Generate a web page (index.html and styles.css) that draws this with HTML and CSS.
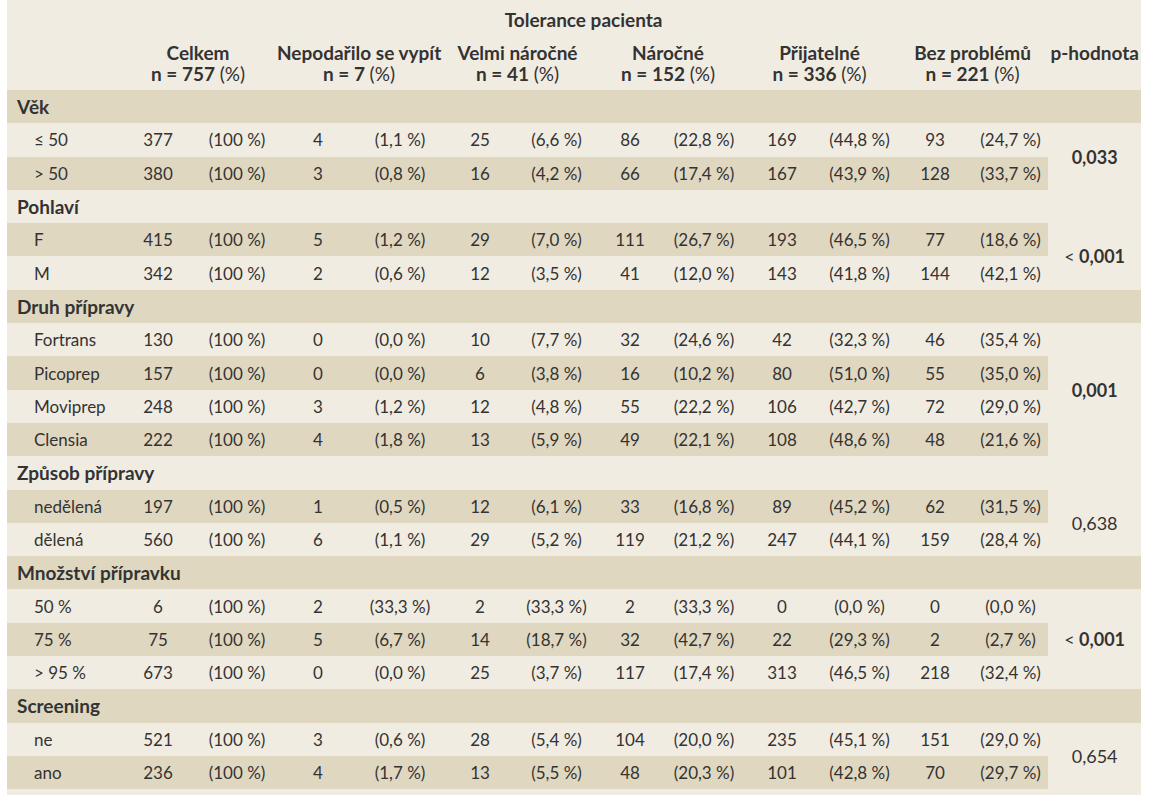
FILE: index.html
```html
<!DOCTYPE html>
<html lang="cs">
<head>
<meta charset="utf-8">
<title>Tolerance pacienta</title>
<link rel="stylesheet" href="styles.css">
</head>
<body>
<div class="wrap">
<table class="tbl">
<colgroup>
<col class="c-label">
<col class="c-n1"><col class="c-p1">
<col class="c-n2"><col class="c-p2">
<col class="c-n3"><col class="c-p3">
<col class="c-n4"><col class="c-p4">
<col class="c-n5"><col class="c-p5">
<col class="c-n6"><col class="c-p6">
<col class="c-pv">
</colgroup>
<thead>
<tr class="h1">
<th></th>
<th colspan="12">Tolerance pacienta</th>
<th></th>
</tr>
<tr class="h2">
<th></th>
<th colspan="2">Celkem<br>n = 757 <span class="reg">(%)</span></th>
<th colspan="2">Nepodařilo se vypít<br>n = 7 <span class="reg">(%)</span></th>
<th colspan="2">Velmi náročné<br>n = 41 <span class="reg">(%)</span></th>
<th colspan="2">Náročné<br>n = 152 <span class="reg">(%)</span></th>
<th colspan="2">Přijatelné<br>n = 336 <span class="reg">(%)</span></th>
<th colspan="2">Bez problémů<br>n = 221 <span class="reg">(%)</span></th>
<th class="pv-h">p-hodnota</th>
</tr>
</thead>
<tbody>
<tr class="d cat"><td colspan="14">Věk</td></tr>
<tr><td class="sub">≤ 50</td><td>377</td><td>(100 %)</td><td>4</td><td>(1,1 %)</td><td>25</td><td>(6,6 %)</td><td>86</td><td>(22,8 %)</td><td>169</td><td>(44,8 %)</td><td>93</td><td>(24,7 %)</td><td class="pv b" rowspan="2">0,033</td></tr>
<tr class="d"><td class="sub">&gt; 50</td><td>380</td><td>(100 %)</td><td>3</td><td>(0,8 %)</td><td>16</td><td>(4,2 %)</td><td>66</td><td>(17,4 %)</td><td>167</td><td>(43,9 %)</td><td>128</td><td>(33,7 %)</td></tr>

<tr class="cat"><td colspan="14">Pohlaví</td></tr>
<tr class="d"><td class="sub">F</td><td>415</td><td>(100 %)</td><td>5</td><td>(1,2 %)</td><td>29</td><td>(7,0 %)</td><td>111</td><td>(26,7 %)</td><td>193</td><td>(46,5 %)</td><td>77</td><td>(18,6 %)</td><td class="pv b" rowspan="2"><span class="lt">&lt;</span> 0,001</td></tr>
<tr><td class="sub">M</td><td>342</td><td>(100 %)</td><td>2</td><td>(0,6 %)</td><td>12</td><td>(3,5 %)</td><td>41</td><td>(12,0 %)</td><td>143</td><td>(41,8 %)</td><td>144</td><td>(42,1 %)</td></tr>

<tr class="d cat"><td colspan="14">Druh přípravy</td></tr>
<tr><td class="sub">Fortrans</td><td>130</td><td>(100 %)</td><td>0</td><td>(0,0 %)</td><td>10</td><td>(7,7 %)</td><td>32</td><td>(24,6 %)</td><td>42</td><td>(32,3 %)</td><td>46</td><td>(35,4 %)</td><td class="pv b" rowspan="4">0,001</td></tr>
<tr class="d"><td class="sub">Picoprep</td><td>157</td><td>(100 %)</td><td>0</td><td>(0,0 %)</td><td>6</td><td>(3,8 %)</td><td>16</td><td>(10,2 %)</td><td>80</td><td>(51,0 %)</td><td>55</td><td>(35,0 %)</td></tr>
<tr><td class="sub">Moviprep</td><td>248</td><td>(100 %)</td><td>3</td><td>(1,2 %)</td><td>12</td><td>(4,8 %)</td><td>55</td><td>(22,2 %)</td><td>106</td><td>(42,7 %)</td><td>72</td><td>(29,0 %)</td></tr>
<tr class="d"><td class="sub">Clensia</td><td>222</td><td>(100 %)</td><td>4</td><td>(1,8 %)</td><td>13</td><td>(5,9 %)</td><td>49</td><td>(22,1 %)</td><td>108</td><td>(48,6 %)</td><td>48</td><td>(21,6 %)</td></tr>

<tr class="cat"><td colspan="14">Způsob přípravy</td></tr>
<tr class="d"><td class="sub">nedělená</td><td>197</td><td>(100 %)</td><td>1</td><td>(0,5 %)</td><td>12</td><td>(6,1 %)</td><td>33</td><td>(16,8 %)</td><td>89</td><td>(45,2 %)</td><td>62</td><td>(31,5 %)</td><td class="pv" rowspan="2">0,638</td></tr>
<tr><td class="sub">dělená</td><td>560</td><td>(100 %)</td><td>6</td><td>(1,1 %)</td><td>29</td><td>(5,2 %)</td><td>119</td><td>(21,2 %)</td><td>247</td><td>(44,1 %)</td><td>159</td><td>(28,4 %)</td></tr>

<tr class="d cat"><td colspan="14">Množství přípravku</td></tr>
<tr><td class="sub">50 %</td><td>6</td><td>(100 %)</td><td>2</td><td>(33,3 %)</td><td>2</td><td>(33,3 %)</td><td>2</td><td>(33,3 %)</td><td>0</td><td>(0,0 %)</td><td>0</td><td>(0,0 %)</td><td class="pv b" rowspan="3"><span class="lt">&lt;</span> 0,001</td></tr>
<tr class="d"><td class="sub">75 %</td><td>75</td><td>(100 %)</td><td>5</td><td>(6,7 %)</td><td>14</td><td>(18,7 %)</td><td>32</td><td>(42,7 %)</td><td>22</td><td>(29,3 %)</td><td>2</td><td>(2,7 %)</td></tr>
<tr><td class="sub">&gt; 95 %</td><td>673</td><td>(100 %)</td><td>0</td><td>(0,0 %)</td><td>25</td><td>(3,7 %)</td><td>117</td><td>(17,4 %)</td><td>313</td><td>(46,5 %)</td><td>218</td><td>(32,4 %)</td></tr>

<tr class="d cat"><td colspan="14">Screening</td></tr>
<tr><td class="sub">ne</td><td>521</td><td>(100 %)</td><td>3</td><td>(0,6 %)</td><td>28</td><td>(5,4 %)</td><td>104</td><td>(20,0 %)</td><td>235</td><td>(45,1 %)</td><td>151</td><td>(29,0 %)</td><td class="pv" rowspan="2">0,654</td></tr>
<tr class="d"><td class="sub">ano</td><td>236</td><td>(100 %)</td><td>4</td><td>(1,7 %)</td><td>13</td><td>(5,5 %)</td><td>48</td><td>(20,3 %)</td><td>101</td><td>(42,8 %)</td><td>70</td><td>(29,7 %)</td></tr>
</tbody>
</table>
</div>
</body>
</html>
```

FILE: styles.css
```css
html, body {
  margin: 0;
  padding: 0;
  background: #ffffff;
}

.wrap {
  margin-left: 7px;
  width: 1134px;
  background: #f1ece2;
  padding-bottom: 6px;
}

.tbl {
  width: 1134px;
  table-layout: fixed;
  border-collapse: collapse;
  border-spacing: 0;
  font-family: Lato, "Open Sans", sans-serif;
  font-size: 17px;
  color: #333333;
}

.c-label { width: 112px; }
.c-n1 { width: 78px; }
.c-p1 { width: 80px; }
.c-n2 { width: 82px; }
.c-p2 { width: 82px; }
.c-n3 { width: 78px; }
.c-p3 { width: 75px; }
.c-n4 { width: 72px; }
.c-p4 { width: 76px; }
.c-n5 { width: 80px; }
.c-p5 { width: 75px; }
.c-n6 { width: 76px; }
.c-p6 { width: 75px; }
.c-pv { width: 93px; }

th {
  font-weight: 700;
  font-size: 19px;
  padding: 0;
  text-align: center;
  white-space: nowrap;
}

.h1 th {
  height: 38px;
  vertical-align: middle;
}

.h2 th {
  height: 52px;
  line-height: 21px;
  vertical-align: top;
  padding-top: 4px;
  box-sizing: border-box;
}

.reg {
  font-weight: 400;
}

td {
  padding: 0;
  height: 33.3px;
  text-align: center;
  vertical-align: middle;
  white-space: nowrap;
}

tr.d td {
  background: #e0d7c0;
}

td.pv {
  background: #f1ece2 !important;
  font-size: 18px;
}

td.b {
  font-weight: 700;
}

.lt {
  font-weight: 400;
}

.cat td {
  font-weight: 700;
  font-size: 19px;
  text-align: left;
  padding-left: 10px;
}

td.sub {
  text-align: left;
  padding-left: 27px;
}
```
